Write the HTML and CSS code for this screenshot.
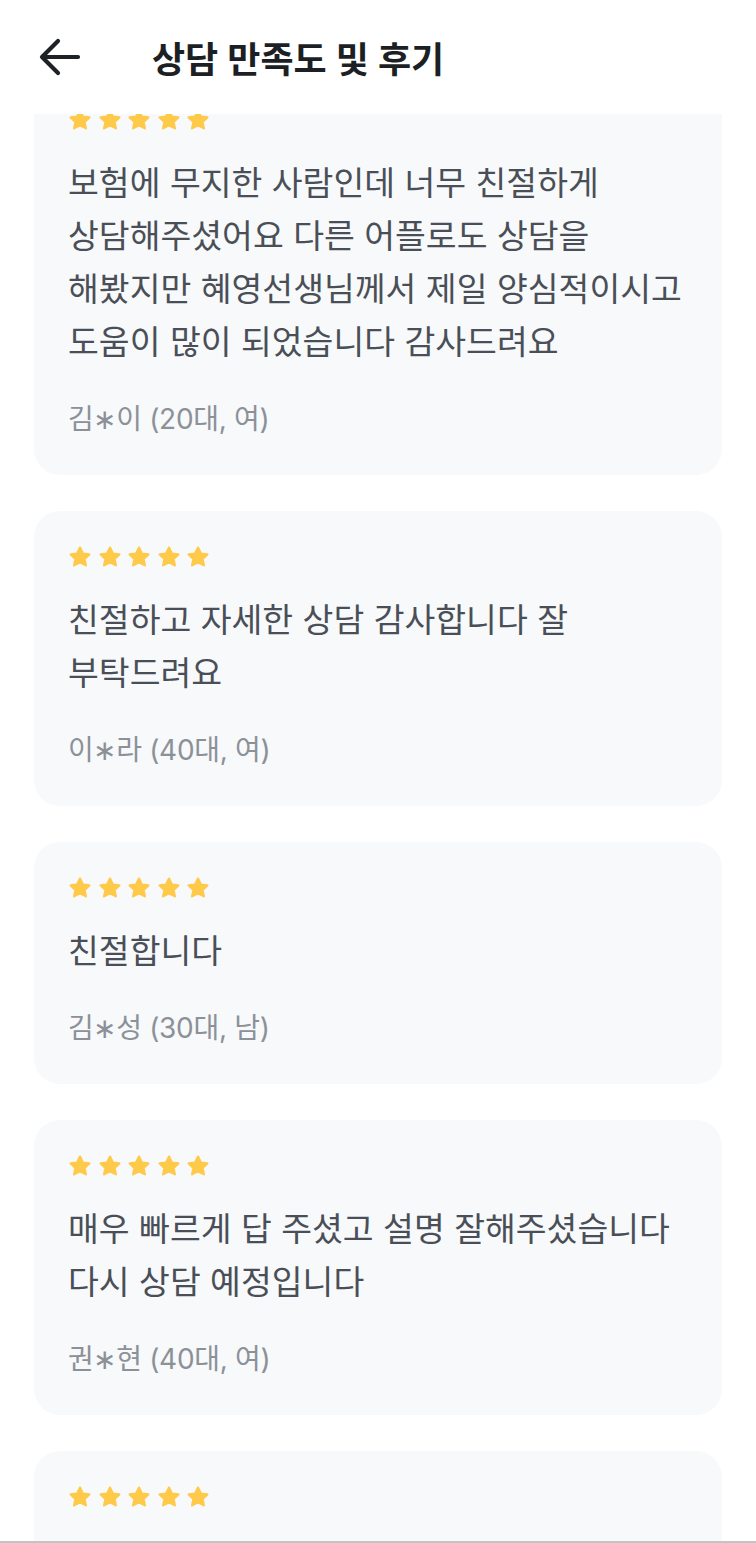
FILE: index.html
```html
<!DOCTYPE html>
<html lang="ko">

<head>
    <meta charset="UTF-8">
    <meta name="viewport" content="width=device-width, initial-scale=1.0">
    <title>상담 만족도 및 후기</title>
    <link rel="stylesheet" href="styles.css">
</head>

<body>
    <div class="page">
        <div class="header">
            <div class="back">
                <svg width="44" height="40" viewBox="0 0 44 40">
                    <path d="M40 20 H5 M20 4 L4 20 L20 36" fill="none" stroke="#1e2126" stroke-width="4.2"
                        stroke-linecap="round" stroke-linejoin="round" />
                </svg>
            </div>
            <div class="title">상담 만족도 및 후기</div>
        </div>
        <div class="content">
            <div class="list">
                <div class="card">
                    <div class="stars"></div>
                    <div class="review">보험에 무지한 사람인데 너무 친절하게<br>상담해주셨어요 다른 어플로도 상담을<br>해봤지만 혜영선생님께서 제일 양심적이시고<br>도움이 많이 되었습니다 감사드려요</div>
                    <div class="meta">김∗이 (20대, 여)</div>
                </div>
                <div class="card">
                    <div class="stars"></div>
                    <div class="review">친절하고 자세한 상담 감사합니다 잘<br>부탁드려요</div>
                    <div class="meta">이∗라 (40대, 여)</div>
                </div>
                <div class="card">
                    <div class="stars"></div>
                    <div class="review">친절합니다</div>
                    <div class="meta">김∗성 (30대, 남)</div>
                </div>
                <div class="card">
                    <div class="stars"></div>
                    <div class="review">매우 빠르게 답 주셨고 설명 잘해주셨습니다<br>다시 상담 예정입니다</div>
                    <div class="meta">권∗현 (40대, 여)</div>
                </div>
                <div class="card card-last">
                    <div class="stars"></div>
                </div>
            </div>
        </div>
        <div class="bottom-line"></div>
    </div>
    <script>
        var star = '<svg width="24" height="22" viewBox="0 0 24 22"><path d="M12 1.6 L14.9 7.6 L21.4 8.4 L16.6 12.9 L17.9 19.4 L12 16.2 L6.1 19.4 L7.4 12.9 L2.6 8.4 L9.1 7.6 Z" fill="#ffc94a" stroke="#ffc94a" stroke-width="2.2" stroke-linejoin="round"/></svg>';
        var boxes = document.getElementsByClassName('stars');
        for (var i = 0; i < boxes.length; i++) {
            boxes[i].innerHTML = star + star + star + star + star;
        }
    </script>
</body>

</html>
```

FILE: styles.css
```css
* {
    margin: 0;
    padding: 0;
    box-sizing: border-box;
}

body {
    background-color: #fff;
    font-family: Inter, "Noto Sans CJK KR", "Noto Sans", sans-serif;
}

.page {
    display: flex;
    flex-direction: column;
    width: 756px;
    height: 1543px;
    overflow: hidden;
}

.header {
    display: flex;
    align-items: center;
    flex-shrink: 0;
    height: 114px;
    padding: 0 0 0 38px;
    background-color: #fff;
    position: relative;
    z-index: 2;
}

.back {
    display: flex;
    width: 44px;
    height: 40px;
}

.title {
    margin-left: 70px;
    font-size: 36px;
    font-weight: 600;
    color: #1c1f24;
}

.content {
    flex: 1;
    overflow: hidden;
}

.list {
    display: flex;
    flex-direction: column;
    gap: 36px;
    margin-top: -40px;
    padding: 0 34px;
}

.card {
    display: flex;
    flex-direction: column;
    padding: 35px 20px 36px 34px;
    background-color: #f7f9fb;
    border-radius: 26px;
}

.card-last {
    min-height: 200px;
}

.stars {
    display: flex;
    gap: 5.5px;
    height: 22px;
    margin-bottom: 26px;
}

.review {
    font-size: 33.5px;
    line-height: 53px;
    color: #4a4f57;
    white-space: nowrap;
}

.meta {
    margin-top: 30px;
    font-size: 28px;
    line-height: 40px;
    color: #8c9198;
    letter-spacing: -0.3px;
}

.bottom-line {
    position: fixed;
    left: 0;
    bottom: 0;
    width: 100%;
    height: 2px;
    background-color: #c4c4c4;
}
```
